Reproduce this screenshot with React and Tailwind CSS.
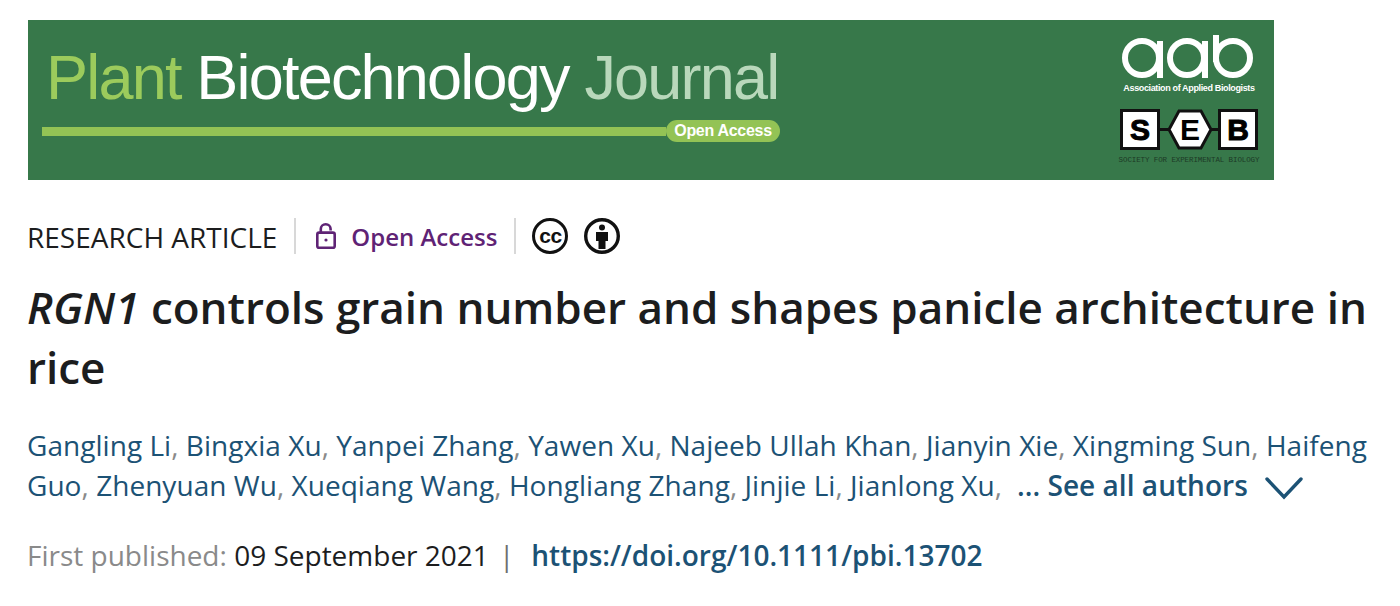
function Lock() {
  return (
    <svg width="20" height="26" viewBox="0 0 20 26" fill="none" stroke="#5f2375" strokeWidth="2.6">
      <rect x="1.3" y="9.6" width="17.4" height="15.1" rx="1.8" />
      <path d="M4.8 9.6V6C4.8 3.3 6.9 1.3 9.7 1.3S14.6 3.3 14.6 6V7.5" />
      <circle cx="10" cy="17" r="1.6" fill="#5f2375" stroke="none" />
    </svg>
  );
}
function CC() {
  return (
    <div className="flex items-center justify-center w-[36px] h-[36px] rounded-full border-[3.4px] border-[#111] text-[#111] font-['Liberation_Sans',sans-serif] font-bold text-[21px] tracking-[-0.5px] leading-none pb-[2px]">
      cc
    </div>
  );
}
function By() {
  return (
    <svg width="36" height="36" viewBox="0 0 36 36">
      <circle cx="18" cy="18" r="16.3" fill="none" stroke="#111" strokeWidth="3.4" />
      <circle cx="18" cy="9.4" r="3" fill="#111" />
      <path d="M12 14H24V23H21.5V31H14.5V23H12Z" fill="#111" />
    </svg>
  );
}
function Sep() {
  return <div className="w-[2px] h-[36px] bg-[#d8d8d8]" />;
}
function Author({ children, last }) {
  return (
    <>
      <span className="text-[#1c5275]">{children}</span>
      <span className="text-[#8a8a8a]">,{last ? "" : " "}</span>
    </>
  );
}
export default function App() {
  const before = ["Gangling Li", "Bingxia Xu", "Yanpei Zhang", "Yawen Xu", "Najeeb Ullah Khan", "Jianyin Xie", "Xingming Sun"];
  const after = ["Zhenyuan Wu", "Xueqiang Wang", "Hongliang Zhang", "Jinjie Li", "Jianlong Xu"];
  return (
    <div className="w-[1400px] h-[606px] bg-white pl-[27px] pt-[20px] overflow-hidden font-['Open_Sans',sans-serif]">
      <div className="ml-[1px] w-[1246px] h-[160px] bg-[#37784a] flex justify-between pl-[14px] pr-[14px]">
        <div className="flex flex-col w-[740px] pt-[20px]">
          <div className="pl-[4px] font-['Liberation_Sans',sans-serif] text-[63px] leading-[75px] tracking-[-1.8px] whitespace-nowrap h-[75px]">
            <span className="text-[#9ccb5c]">Plant </span>
            <span className="text-white">Biotechnology </span>
            <span className="text-[#b9d8bb]">Journal</span>
          </div>
          <div className="flex items-center mt-[5px]">
            <div className="h-[9px] w-[624px] bg-[#93c355]" />
            <div className="h-[22px] w-[114px] rounded-full bg-[#93c355] text-white font-['Liberation_Sans',sans-serif] text-[16px] font-bold flex items-center justify-center tracking-[-0.3px] whitespace-nowrap">
              Open Access
            </div>
          </div>
        </div>
        <div className="flex flex-col items-center w-[142px] pt-[15px]">
          <svg width="136" height="44" viewBox="0 0 136 44" fill="none" stroke="white" strokeWidth="6" className="-ml-[2px]">
            <circle cx="22" cy="23" r="17" />
            <path d="M40 6V43" />
            <circle cx="67" cy="23" r="17" />
            <path d="M85 6V43" />
            <circle cx="113" cy="23" r="17" />
            <path d="M96 0V27" />
          </svg>
          <div className="mt-[3px] text-white font-['Liberation_Sans',sans-serif] font-bold text-[9px] leading-[12px] tracking-[-0.36px] whitespace-nowrap">
            Association of Applied Biologists
          </div>
          <div className="flex items-center mt-[15px] font-['Liberation_Sans',sans-serif] font-bold text-[30px] text-black [-webkit-text-stroke:1px_black]">
            <div className="w-[40px] h-[41px] bg-white border-[3px] border-[#111] flex items-center justify-center">S</div>
            <div className="w-[8px] h-[3px] bg-[#111]" />
            <svg width="46" height="41" viewBox="0 0 46 41" className="-ml-[1px] -mr-[1px] shrink-0">
              <path d="M12 2H34L44 20.5L34 39H12L2 20.5Z" fill="white" stroke="#111" strokeWidth="3" />
              <text x="23" y="31" textAnchor="middle" fontSize="30" fontWeight="700" fontFamily="Liberation Sans">E</text>
            </svg>
            <div className="w-[6px] h-[3px] bg-[#111]" />
            <div className="w-[40px] h-[41px] bg-white border-[3px] border-[#111] flex items-center justify-center">B</div>
          </div>
          <div className="mt-[6px] font-['Liberation_Mono',monospace] text-[7.5px] leading-[8px] text-[#1d3a26] tracking-[-0.1px] whitespace-nowrap">
            SOCIETY FOR EXPERIMENTAL BIOLOGY
          </div>
        </div>
      </div>

      <div className="flex items-center mt-[36px] h-[40px]">
        <span className="mt-[2px] text-[28px] text-[#1c1d1e] whitespace-nowrap">RESEARCH ARTICLE</span>
        <div className="ml-[17px]"><Sep /></div>
        <div className="ml-[20px] mr-[15px]"><Lock /></div>
        <span className="mt-[2px] text-[24px] font-semibold text-[#5f2375] whitespace-nowrap">Open Access</span>
        <div className="ml-[17px]"><Sep /></div>
        <div className="ml-[16px] flex gap-[16px]"><CC /><By /></div>
      </div>

      <h1 className="mt-[21px] w-[1350px] text-[44px] leading-[60px] font-semibold text-[#1c1d1e]">
        <div><i>RGN1</i><span> controls grain number and shapes panicle architecture in</span></div>
        <div>rice</div>
      </h1>

      <div className="mt-[28px] w-[1350px] text-[28px] leading-[40px] tracking-[0.04px]">
        <div className="whitespace-nowrap">
          {before.map((a) => <Author key={a}>{a}</Author>)}
          <span className="text-[#1c5275]">Haifeng</span>
        </div>
        <div className="whitespace-nowrap">
          <Author>Guo</Author>
          {after.map((a, i) => <Author key={a} last={i === after.length - 1}>{a}</Author>)}
          <span className="ml-[15px] font-semibold text-[#1c5275]">... See all authors</span>
          <svg width="38" height="24" viewBox="0 0 38 24" fill="none" stroke="#1c5275" strokeWidth="3.4" strokeLinecap="round" className="inline-block ml-[17px] align-[-4px]">
            <path d="M2 3L19 21L36 3" />
          </svg>
        </div>
      </div>

      <div className="mt-[30px] text-[28px] leading-[40px] whitespace-nowrap">
        <span className="text-[#8a8a8a]">First published: </span>
        <span className="text-[#1c1d1e]">09 September 2021</span>
        <span className="text-[#6f6f6f] ml-[10px]">|</span>
        <span className="ml-[17px] font-semibold text-[#1c5275]">https://doi.org/10.1111/pbi.13702</span>
      </div>
    </div>
  );
}
